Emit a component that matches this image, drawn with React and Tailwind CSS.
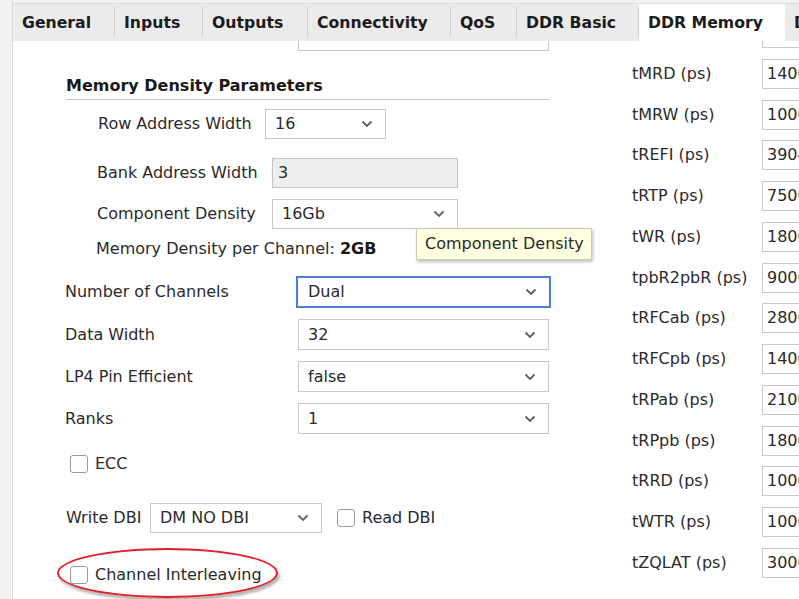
import React from "react";

const Chevron = () => (
  <svg width="12" height="8" viewBox="0 0 12 8" className="shrink-0">
    <path d="M1.5 1.5 L6 6 L10.5 1.5" fill="none" stroke="#5f5f5f" strokeWidth="1.8" />
  </svg>
);

function Select({ value, w, focused, h = "h-[30px]" }) {
  const cls = focused
    ? "border-2 border-[#4b7fd1] pl-[10px] pr-[12px]"
    : "border border-[#c8c8c8] pl-[9px] pr-[12px]";
  return (
    <div
      className={`flex items-center justify-between bg-white shrink-0 ${h} ${cls}`}
      style={{ width: w }}
    >
      <span>{value}</span>
      <Chevron />
    </div>
  );
}

function Checkbox() {
  return <div className="w-[18px] h-[18px] rounded-[3px] border border-[#9c9c9c] bg-white shrink-0" />;
}

const tabs = [
  { label: "General", w: 102 },
  { label: "Inputs", w: 88 },
  { label: "Outputs", w: 105 },
  { label: "Connectivity", w: 143 },
  { label: "QoS", w: 66 },
  { label: "DDR Basic", w: 122 },
  { label: "DDR Memory", w: 146, selected: true },
  { label: "DDR Basic", w: 100 },
];

const timings = [
  ["tCKE (ps)", "7500"],
  ["tMRD (ps)", "14000"],
  ["tMRW (ps)", "10000"],
  ["tREFI (ps)", "3904000"],
  ["tRTP (ps)", "7500"],
  ["tWR (ps)", "18000"],
  ["tpbR2pbR (ps)", "90000"],
  ["tRFCab (ps)", "280000"],
  ["tRFCpb (ps)", "140000"],
  ["tRPab (ps)", "21000"],
  ["tRPpb (ps)", "18000"],
  ["tRRD (ps)", "10000"],
  ["tWTR (ps)", "10000"],
  ["tZQLAT (ps)", "30000"],
];

export default function App() {
  return (
    <div
      className="relative w-[799px] h-[599px] overflow-hidden bg-[#f2f2f2] text-[16px] text-[#2a2a2a] leading-[18px]"
      style={{ fontFamily: '"DejaVu Sans", Verdana, sans-serif' }}
    >
      <div className="ml-[12px] h-full flex flex-col border-l border-[#d6d6d6]">
        {/* tab bar */}
        <div className="relative z-10 mt-[3px] h-[38px] shrink-0 flex bg-[#ebebeb] border-t border-[#dcdcdc] text-[15.7px]">
          {tabs.map((t, i) => (
            <div
              key={i}
              className={`relative shrink-0 flex items-center pl-[9px] font-bold text-[#1c1c1c] whitespace-nowrap ${
                t.selected ? "bg-white" : ""
              }`}
              style={{ width: t.w }}
            >
              {t.label}
              {!t.selected && i < tabs.length - 2 && (
                <div className="absolute right-0 top-[3px] h-[30px] w-px bg-[#cdcdcd]" />
              )}
            </div>
          ))}
        </div>

        {/* content */}
        <div className="flex-1 bg-white flex overflow-hidden">
          {/* left column */}
          <div className="w-[619px] shrink-0 flex flex-col mt-[-20px] pl-[1px]">
            <div className="flex items-center h-[30px] pl-[51px]">
              <div className="w-[233px] mt-[-8px]">Memory Type</div>
              <Select value="LPDDR4" w={251} />
            </div>

            <div className="ml-[52px] w-[483px] h-[49px] flex items-end pb-[4px] border-b border-[#c8c8c8] font-bold text-[#1a1a1a]">
              Memory Density Parameters
            </div>

            <div className="mt-[9px] flex items-center pl-[84px]">
              <div className="w-[167px]">Row Address Width</div>
              <Select value="16" w={121} />
            </div>

            <div className="mt-[19px] flex items-center pl-[83px]">
              <div className="w-[175px]">Bank Address Width</div>
              <div className="w-[186px] h-[30px] flex items-center pl-[5px] bg-[#eeeeee] border border-[#c4c4c4]">
                3
              </div>
            </div>

            <div className="mt-[11px] flex items-center pl-[83px]">
              <div className="w-[175px]">Component Density</div>
              <Select value="16Gb" w={186} />
            </div>

            <div className="mt-[11px] pl-[82px] h-[18px]">
              Memory Density per Channel: <span className="font-bold text-[#1a1a1a]">2GB</span>
            </div>

            <div className="mt-[18px] flex flex-col gap-[11px]">
              <div className="flex items-center pl-[51px]">
                <div className="w-[231px]">Number of Channels</div>
                <Select value="Dual" w={255} focused h="h-[32px]" />
              </div>
              <div className="flex items-center pl-[51px]">
                <div className="w-[233px]">Data Width</div>
                <Select value="32" w={251} h="h-[31px]" />
              </div>
              <div className="flex items-center pl-[51px]">
                <div className="w-[233px]">LP4 Pin Efficient</div>
                <Select value="false" w={251} h="h-[31px]" />
              </div>
              <div className="flex items-center pl-[51px]">
                <div className="w-[233px]">Ranks</div>
                <Select value="1" w={251} h="h-[31px]" />
              </div>
            </div>

            <div className="mt-[21px] flex items-center gap-[7px] pl-[56px] h-[18px]">
              <Checkbox />
              <span>ECC</span>
            </div>

            <div className="mt-[30px] flex items-center pl-[52px]">
              <div className="w-[84px]">Write DBI</div>
              <Select value="DM NO DBI" w={172} />
              <div className="ml-[15px] flex items-center gap-[7px]">
                <Checkbox />
                <span>Read DBI</span>
              </div>
            </div>

            <div className="mt-[33px] flex items-center gap-[7px] pl-[56px] h-[18px]">
              <Checkbox />
              <span>Channel Interleaving</span>
            </div>
          </div>

          {/* right column */}
          <div className="flex-1 flex flex-col gap-[10.77px] mt-[-23px] min-w-0">
            {timings.map(([label, value]) => (
              <div key={label} className="flex items-center h-[30px]">
                <div className="w-[130px] shrink-0 whitespace-nowrap">{label}</div>
                <div className="w-[120px] h-[30px] shrink-0 flex items-center pl-[4px] border border-[#c8c8c8] bg-white">
                  {value}
                </div>
              </div>
            ))}
          </div>
        </div>
      </div>

      {/* tooltip */}
      <div className="absolute left-[416px] top-[228px] w-[176px] h-[32px] flex items-center pl-[8px] bg-[#ffffe1] border border-[#c9c9b4] shadow-[1px_2px_3px_rgba(0,0,0,0.25)] text-[#2a2a2a] whitespace-nowrap">
        Component Density
      </div>

      {/* red highlight ellipse */}
      <div className="absolute left-[57px] top-[548px] w-[221px] h-[50px] rounded-[50%] border-2 border-[#e2202a] shadow-[2px_3px_3px_rgba(0,0,0,0.3)]" />
    </div>
  );
}
